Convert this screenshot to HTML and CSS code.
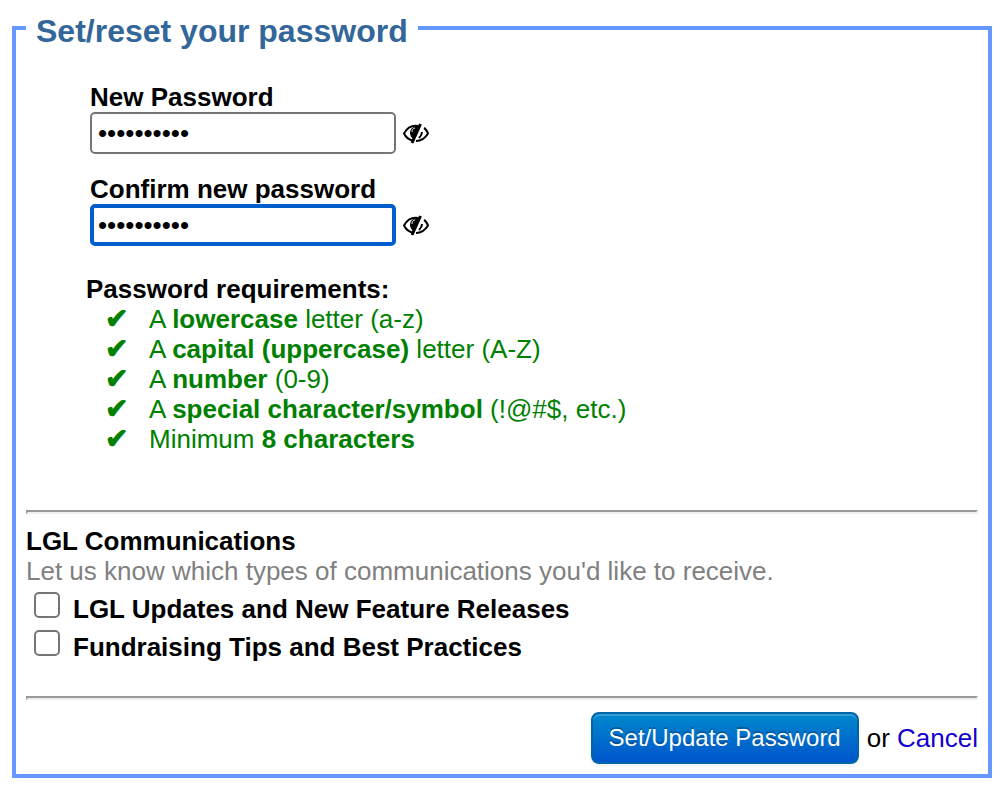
FILE: index.html
```
<!DOCTYPE html>
<html lang="en">
<head>
    <meta charset="UTF-8">
    <meta name="viewport" content="width=device-width, initial-scale=1.0">
    <title>Set/reset your password</title>
    <link rel="stylesheet" href="styles.css">
</head>
<body>
    <form>
        <fieldset class="password-box">
            <legend>Set/reset your password</legend>

            <div class="fields">
                <div class="field">
                    <label for="password">New Password</label>
                    <div class="field-row">
                        <input type="password" id="password" value="Abcdef123!">
                        <button type="button" class="toggle" aria-label="Show password">
                            <svg viewBox="0 0 26 22" width="26" height="22">
                                <g id="eye">
                                    <path d="M15 4C9 3 4 6 1 11.500c2 4 5 6 8 7M21 6c2 1 3 3 4 5.500-3 5-6 7.500-12 7.500M19 10c0 2-1 4-3 6" fill="none" stroke="#000" stroke-width="2"/>
                                    <path d="M15 4c-5 0-8 3-8 7 0 2 1 4 3 6L17 4z"/>
                                    <path d="M12 6c-2 0-3 2-3 4" fill="none" stroke="#fff"/>
                                    <path d="M17.500 2L9 21" stroke="#000" stroke-width="3"/>
                                </g>
                            </svg>
                        </button>
                    </div>
                </div>
                <div class="field">
                    <label for="confirm">Confirm new password</label>
                    <div class="field-row">
                        <input type="password" id="confirm" class="focused" value="Abcdef123!">
                        <button type="button" class="toggle" aria-label="Show password">
                            <svg viewBox="0 0 26 22" width="26" height="22"><use href="#eye"/></svg>
                        </button>
                    </div>
                </div>
            </div>

            <div class="requirements">
                <strong>Password requirements:</strong>
                <ul>
                    <li>A <b>lowercase</b> letter (a-z)</li>
                    <li>A <b>capital (uppercase)</b> letter (A-Z)</li>
                    <li>A <b>number</b> (0-9)</li>
                    <li>A <b>special character/symbol</b> (!@#$, etc.)</li>
                    <li>Minimum <b>8 characters</b></li>
                </ul>
            </div>

            <hr>

            <div class="communications">
                <strong>LGL Communications</strong>
                <p>Let us know which types of communications you'd like to receive.</p>
                <div class="option">
                    <input type="checkbox" id="updates">
                    <label for="updates">LGL Updates and New Feature Releases</label>
                </div>
                <div class="option">
                    <input type="checkbox" id="tips">
                    <label for="tips">Fundraising Tips and Best Practices</label>
                </div>
            </div>

            <hr>

            <div class="actions">
                <button type="submit" class="submit">Set/Update Password</button>
                <span>or <a href="#">Cancel</a></span>
            </div>
        </fieldset>
    </form>
</body>
</html>
```
FILE: styles.css
```
* {
    box-sizing: border-box;
}

body {
    margin: 0;
    padding: 9px 10px 10px 12px;
    background-color: #fff;
    color: #000;
    font-family: "Liberation Sans", Arial, Helvetica, sans-serif;
    font-size: 26px;
    line-height: 30px;
}

.password-box {
    margin: 0;
    padding: 0 10px 10px;
    border: 4px solid #6699ff;
}

legend {
    padding: 6px 10px 0;
    color: #336699;
    font-size: 32px;
    font-weight: bold;
    line-height: 32px;
}

label {
    font-weight: bold;
}

.fields {
    display: flex;
    flex-direction: column;
    gap: 20px;
    padding: 35px 0 0 64px;
}

.field label {
    display: block;
}

.field-row {
    display: flex;
    align-items: center;
    gap: 7px;
}

.field-row input {
    width: 306px;
    height: 42px;
    padding: 0 6px;
    border: 2px solid #767676;
    border-radius: 5px;
    background-color: #fff;
    color: #000;
    font-family: inherit;
    font-size: 26px;
}

.field-row input.focused {
    padding: 0 4px;
    border: 4px solid #005fcc;
    outline: none;
}

.toggle {
    display: flex;
    padding: 0;
    border: none;
    background: none;
    cursor: pointer;
}

.requirements {
    padding: 28px 0 0 60px;
}

.requirements ul {
    margin: 0;
    padding: 0 0 0 18px;
    color: #008000;
    list-style: none;
}

.requirements li {
    display: flex;
    white-space: pre-wrap;
}

.requirements li::before {
    content: "\2714";
    width: 44px;
    padding-left: 1px;
    font-family: "DejaVu Sans", sans-serif;
    font-size: 28px;
    -webkit-text-stroke: 1px #008000;
}

hr {
    height: 4px;
    margin: 0;
    border-width: 2px;
    border-style: solid;
    border-color: #999 #eee #eee #999;
}

.requirements + hr {
    margin-top: 56px;
}

.communications {
    padding: 12px 0 34px;
}

.communications p {
    margin: 0;
    color: #808080;
}

.option {
    display: flex;
    align-items: flex-start;
    gap: 13px;
    padding: 6px 0 0 8px;
}

.option input {
    appearance: none;
    width: 26px;
    height: 26px;
    margin: 0;
    border: 2px solid #767676;
    border-radius: 5px;
    background-color: #fff;
}

.option label {
    padding-top: 2px;
}

.actions {
    display: flex;
    justify-content: flex-end;
    align-items: center;
    gap: 8px;
    padding-top: 12px;
}

.submit {
    height: 52px;
    padding: 0 16px;
    border: 2px solid #0064a8;
    border-radius: 8px;
    background: linear-gradient(#0088cc, #0055cc);
    box-shadow: inset 0 2px 0 rgba(255, 255, 255, 0.2), 0 2px 4px rgba(0, 0, 0, 0.05);
    color: #fff;
    font-family: inherit;
    font-size: 24px;
    text-shadow: 0 -2px 0 rgba(0, 0, 0, 0.25);
    cursor: pointer;
}

a {
    color: #1100cc;
    text-decoration: none;
}
```
